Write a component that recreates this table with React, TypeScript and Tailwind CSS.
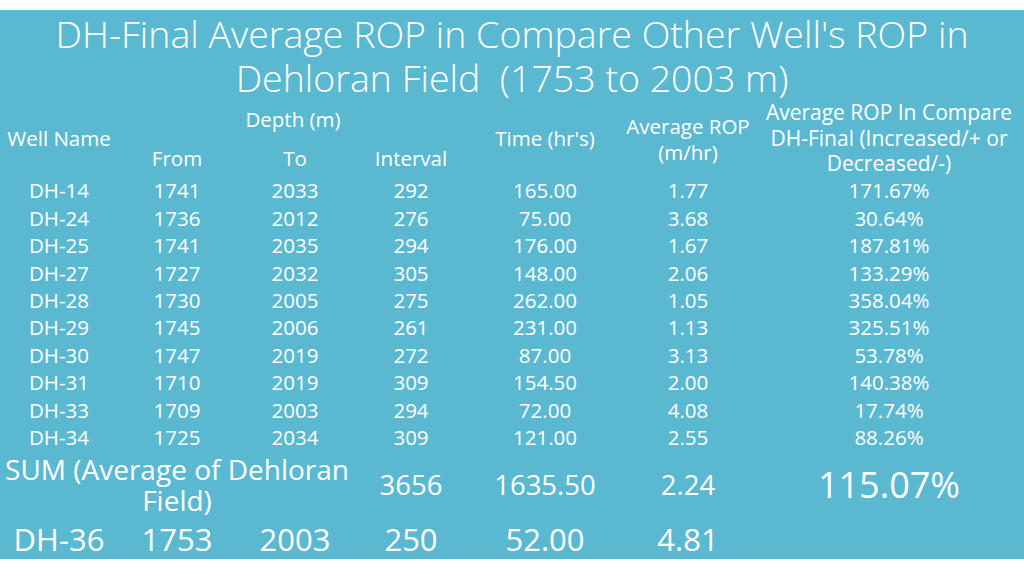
const rows = [
  ['DH-14', '1741', '2033', '292', '165.00', '1.77', '171.67%'],
  ['DH-24', '1736', '2012', '276', '75.00', '3.68', '30.64%'],
  ['DH-25', '1741', '2035', '294', '176.00', '1.67', '187.81%'],
  ['DH-27', '1727', '2032', '305', '148.00', '2.06', '133.29%'],
  ['DH-28', '1730', '2005', '275', '262.00', '1.05', '358.04%'],
  ['DH-29', '1745', '2006', '261', '231.00', '1.13', '325.51%'],
  ['DH-30', '1747', '2019', '272', '87.00', '3.13', '53.78%'],
  ['DH-31', '1710', '2019', '309', '154.50', '2.00', '140.38%'],
  ['DH-33', '1709', '2003', '294', '72.00', '4.08', '17.74%'],
  ['DH-34', '1725', '2034', '309', '121.00', '2.55', '88.26%'],
];

export default function App() {
  return (
    <div
      className="w-[1024px] h-[579px] bg-white pt-[10px] text-white overflow-hidden"
      style={{ fontFamily: '"Open Sans", "Liberation Sans", sans-serif' }}
    >
      <div className="h-[549px] bg-[#5bb8d1] pt-[2px]">
        {/* Title */}
        <h1 className="text-center text-[37.5px] leading-[44px] font-light whitespace-nowrap">
          DH-Final Average ROP in Compare Other Well's ROP in
          <br />
          Dehloran Field&nbsp; (1753 to 2003 m)
        </h1>

        {/* Table */}
        <div className="grid grid-cols-[118px_118px_118px_114px_154px_132px_1fr] grid-rows-[39px_38px_repeat(10,27.4px)_66px_45px] text-center text-[20.5px]">
          {/* header */}
          <div className="row-span-2 flex items-center justify-center">Well Name</div>
          <div className="col-span-3 flex items-center justify-center">Depth (m)</div>
          <div className="row-span-2 flex items-center justify-center">Time (hr's)</div>
          <div className="row-span-2 flex items-center justify-center">
            <div className="leading-[26px]">
              Average ROP
              <br />
              (m/hr)
            </div>
          </div>
          <div className="row-span-2 flex items-center justify-center">
            <div className="leading-[25.5px] whitespace-nowrap text-[21px]">
              Average ROP In Compare
              <br />
              DH-Final (Increased/+ or
              <br />
              Decreased/-)
            </div>
          </div>
          <div className="flex items-center justify-center">From</div>
          <div className="flex items-center justify-center">To</div>
          <div className="flex items-center justify-center">Interval</div>

          {/* data rows */}
          {rows.map((r) =>
            r.map((c, i) => (
              <div key={r[0] + i} className="flex items-center justify-center leading-none">
                {c}
              </div>
            ))
          )}

          {/* SUM row */}
          <div className="col-span-3 flex items-center justify-center pt-[2px]">
            <div className="text-[28px] leading-[31px]">
              SUM (Average of Dehloran
              <br />
              Field)
            </div>
          </div>
          <div className="flex items-center justify-center pt-[2px] text-[27.5px]">3656</div>
          <div className="flex items-center justify-center pt-[2px] text-[27.5px]">1635.50</div>
          <div className="flex items-center justify-center pt-[2px] text-[27.5px]">2.24</div>
          <div className="flex items-center justify-center pt-[2px] text-[36px]">115.07%</div>

          {/* DH-36 row */}
          <div className="flex items-center justify-center text-[31px]">DH-36</div>
          <div className="flex items-center justify-center text-[31px]">1753</div>
          <div className="flex items-center justify-center text-[31px]">2003</div>
          <div className="flex items-center justify-center text-[31px]">250</div>
          <div className="flex items-center justify-center text-[31px]">52.00</div>
          <div className="flex items-center justify-center text-[31px]">4.81</div>
          <div />
        </div>
      </div>
    </div>
  );
}
